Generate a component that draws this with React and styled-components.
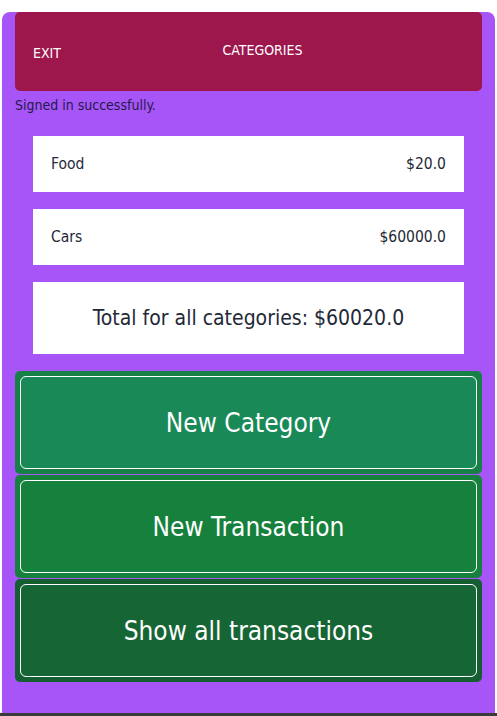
import React from "react";
import styled, { createGlobalStyle } from "styled-components";

const GlobalStyle = createGlobalStyle`
  body {
    margin: 0;
    background: #ffffff;
    font-family: "DejaVu Sans Condensed", "DejaVu Sans", sans-serif;
  }
`;

const Page = styled.div`
  min-height: 716px;
  display: flex;
  flex-direction: column;
`;

const Panel = styled.div`
  margin: 12px 2px 0 2px;
  padding: 0 13px 31px 13px;
  background: #a855f7;
  border-radius: 8px 8px 0 0;
  flex: 1;
`;

const Header = styled.div`
  display: flex;
  align-items: center;
  height: 79px;
  padding: 0 18px;
  background: #9d174d;
  border-radius: 5px;
  color: #ffffff;
  font-size: 14px;
  text-transform: uppercase;
`;

const ExitButton = styled.span`
  padding-top: 2px;
  cursor: pointer;
`;

const Title = styled.span`
  flex: 1;
  padding-bottom: 4px;
  text-align: center;
`;

const Notice = styled.div`
  margin: 6px 0 23px 0;
  font-size: 14px;
  color: #1e1b4b;
`;

const CardList = styled.div`
  display: flex;
  flex-direction: column;
  gap: 17px;
  margin: 0 18px 17px 18px;
`;

const CategoryRow = styled.div`
  display: flex;
  justify-content: space-between;
  align-items: center;
  height: 56px;
  padding: 0 18px;
  background: #ffffff;
  font-size: 15.5px;
  color: #1f2937;
`;

const TotalCard = styled.div`
  display: flex;
  justify-content: center;
  align-items: center;
  height: 72px;
  background: #ffffff;
  font-size: 21px;
  color: #1f2937;
`;

const Actions = styled.div`
  display: flex;
  flex-direction: column;
  gap: 1px;
`;

const ActionButton = styled.button`
  display: block;
  width: 100%;
  height: 103px;
  padding: 5px;
  border: none;
  border-radius: 5px;
  background: ${(p) => p.$ring};
  cursor: pointer;
  font-family: inherit;
`;

const ActionInner = styled.span`
  display: flex;
  align-items: center;
  justify-content: center;
  height: 100%;
  box-sizing: border-box;
  border: 1px solid #ffffff;
  border-radius: 6px;
  background: ${(p) => p.$bg};
  color: #ffffff;
  font-size: 26px;
`;

const BottomBar = styled.div`
  height: 5px;
  background: #3a3a3a;
`;

const categories = [
  { name: "Food", amount: "$20.0" },
  { name: "Cars", amount: "$60000.0" },
];

const actions = [
  { label: "New Category", ring: "#168047", bg: "#198957" },
  { label: "New Transaction", ring: "#16803d", bg: "#16803d" },
  { label: "Show all transactions", ring: "#155e31", bg: "#166534" },
];

export default function App() {
  return (
    <>
      <GlobalStyle />
      <Page>
        <Panel>
          <Header>
            <ExitButton>Exit</ExitButton>
            <Title>Categories</Title>
          </Header>
          <Notice>Signed in successfully.</Notice>
          <CardList>
            {categories.map((c) => (
              <CategoryRow key={c.name}>
                <span>{c.name}</span>
                <span>{c.amount}</span>
              </CategoryRow>
            ))}
            <TotalCard>Total for all categories: $60020.0</TotalCard>
          </CardList>
          <Actions>
            {actions.map((a) => (
              <ActionButton key={a.label} $ring={a.ring}>
                <ActionInner $bg={a.bg}>{a.label}</ActionInner>
              </ActionButton>
            ))}
          </Actions>
        </Panel>
        <BottomBar />
      </Page>
    </>
  );
}
